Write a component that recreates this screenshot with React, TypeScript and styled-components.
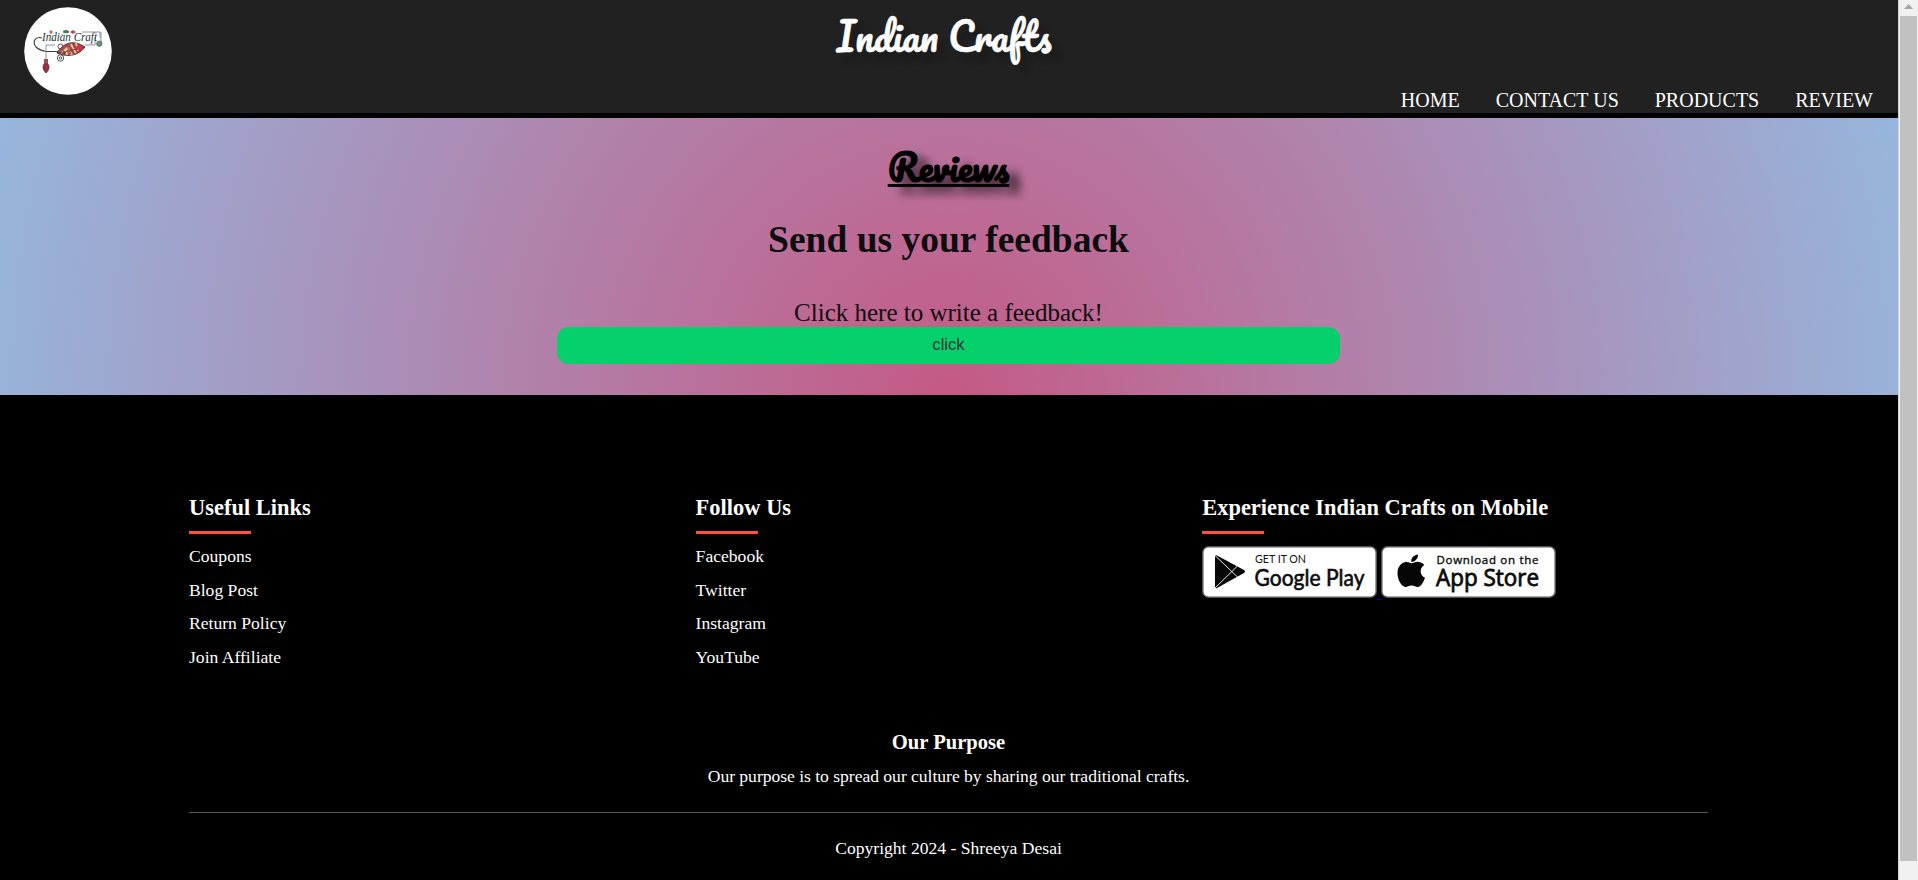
import React from "react";
import styled, { createGlobalStyle } from "styled-components";

const Global = createGlobalStyle`
  * { box-sizing: border-box; margin: 0; padding: 0; }
  html, body { height: 100%; overflow: hidden; }
  body { font-family: "Liberation Serif", "Times New Roman", serif; background: #000; }
`;

const Shell = styled.div`
  display: grid;
  grid-template-columns: 1898px 20px;
  width: 1918px;
  height: 880px;
  overflow: hidden;
`;

const Page = styled.div`
  display: flex;
  flex-direction: column;
  background: radial-gradient(circle 1040px at 949px 392px, #c45a85 0%, #94bbe2 100%);
`;

const Header = styled.header`
  display: grid;
  grid-template-columns: 1fr auto 1fr;
  height: 118px;
  background: #212121;
  border-bottom: 5px solid #000;
`;

const Logo = styled.svg`
  width: 88px;
  height: 88px;
  margin: 7px 0 0 24px;
`;

const Brand = styled.h1`
  height: 80px;
  margin-right: 10px;
  font: normal 400 37.6px/72px Pacifico, cursive;
  -webkit-text-stroke: 0.5px #fff;
  white-space: nowrap;
  color: #fff;
  text-shadow: 8px 8px 6px rgba(0, 0, 0, 0.18);
`;

const Nav = styled.nav`
  display: flex;
  justify-content: flex-end;
  align-items: flex-end;
  gap: 36px;
  padding: 0 25px 1px 0;
`;

const NavLink = styled.a`
  font-size: 20px;
  line-height: 24px;
  color: #fff;
  white-space: nowrap;
`;

const Reviews = styled.section`
  display: flex;
  flex-direction: column;
  align-items: center;
  height: 277px;
  padding: 19px 1px 0 0;
  color: #0d0d0d;
`;

const Title = styled.h1`
  height: 60px;
  font: normal 700 36px/60px Pacifico, cursive;
  color: #000;
  text-decoration: underline;
  text-shadow: 11px 7px 9px rgba(0, 0, 0, 0.6);
`;

const Subtitle = styled.h2`
  margin-top: 21px;
  font-size: 37.5px;
  line-height: 44px;
`;

const Prompt = styled.p`
  margin-top: 37px;
  font-size: 25px;
  line-height: 28px;
`;

const Button = styled.button`
  width: 783px;
  height: 37px;
  border: 0;
  border-radius: 12px;
  background: #06d06c;
  color: #333;
  font: 16.6px "Liberation Sans", Arial, sans-serif;
  padding-bottom: 2px;
`;

const Footer = styled.footer`
  flex: 1;
  padding: 100px 190px 0 189px;
  background: #000;
  color: #fff;
  font-size: 17.6px;
`;

const Columns = styled.div`
  display: grid;
  grid-template-columns: repeat(3, 506.6px);
  height: 235px;
`;

const ColumnTitle = styled.h2`
  width: max-content;
  font-size: 22.4px;
  line-height: 26px;
  letter-spacing: 0.04px;
`;

const Accent = styled.div`
  width: 62px;
  height: 3px;
  margin-top: 10px;
  background: #ff523b;
`;

const List = styled.ul`
  margin-top: 6px;
  list-style: none;
  line-height: 33.6px;
`;

const Badges = styled.div`
  display: flex;
  margin-top: 12px;
`;

const Badge = styled.svg`
  width: 175px;
  height: 52px;
`;

const BadgeGap = styled.span`
  width: 4px;
  height: 1px;
  margin-top: 53px;
  background: #0000ee;
`;

const Purpose = styled.div`
  text-align: center;
  border-bottom: 1px solid #555;
  height: 83px;
  h3 { font-size: 20.6px; line-height: 24px; }
  p { margin-top: 12px; line-height: 20px; letter-spacing: -0.03px; }
`;

const Copyright = styled.p`
  margin-top: 25px;
  text-align: center;
  line-height: 20px;
`;

const ScrollTrack = styled.div`
  display: flex;
  flex-direction: column;
  align-items: center;
  background: #f0f0f0;
  border-left: 1px solid #d2d2d2;
`;

const ScrollArrow = styled.svg`
  width: 17px;
  height: 16px;
`;

const ScrollThumb = styled.div`
  width: 17px;
  height: 845px;
  background: #c1c1c1;
`;

const links = ["Coupons", "Blog Post", "Return Policy", "Join Affiliate"];
const social = ["Facebook", "Twitter", "Instagram", "YouTube"];

const LogoArt = () => (
  <Logo viewBox="0 0 88 88">
    <circle cx="44" cy="44" r="43.8" fill="#fff" />
    <g fill="none" stroke="#3c4044" strokeWidth="0.9">
      <path d="M18 31C11 29 8 35 12 40C15 43 19 44 23 44.5H35" strokeWidth="1.1" />
      <path d="M22 43V38H31M22 45V52M58 25H76V31M61 38H71V30M77 25V37" stroke="#85898b" />
      <circle cx="36.5" cy="39.5" r="2.5" />
      <circle cx="36.5" cy="51" r="3.2" />
      <circle cx="36.5" cy="51" r="1.2" />
    </g>
    <text x="18" y="33.5" fontFamily="Liberation Serif" fontStyle="italic" fontSize="13" fill="#25333a" textLength="55" lengthAdjust="spacingAndGlyphs">Indian Craft</text>
    <path d="M33 46C39 36 49 32 61 40C55 48 45 51 33 46Z" fill="#b9454f" stroke="#3b3032" strokeWidth="0.9" />
    <path d="M37 46L42 42L43 48M43 40L48 48M47 37L52 46M52 36L54 44" stroke="#ecc58a" strokeWidth="2" fill="none" />
    <path d="M33 46C43 45 51 42 61 40M41 47L38 42M47 47L43 39M53 45L49 37" stroke="#423236" strokeWidth="0.7" fill="none" />
    <path d="M54 38L60 40L55 44L51 41Z" fill="#d92f48" />
    <path d="M22 55C26 58 26 62 22 66C18 62 18 58 22 55Z" fill="#a32d3e" stroke="#37353a" strokeWidth="0.8" />
    <path d="M20 52H24V56H20Z" fill="#a9454e" />
    <circle cx="27" cy="25" r="1.7" fill="#cf6768" />
    <ellipse cx="42" cy="24.7" rx="3" ry="1.6" fill="#4d785a" />
    <path d="M46 25L49 23L52 25L49 27Z" fill="#ce4350" />
    <circle cx="75.3" cy="36.7" r="2.7" fill="#6c927b" stroke="#445" strokeWidth="0.6" />
  </Logo>
);

const GoogleBadge = () => (
  <Badge viewBox="0 0 175 52">
    <rect x="0.8" y="0.8" width="173.4" height="50.4" rx="5.5" fill="#fff" stroke="#555" strokeWidth="1.5" />
    <path d="M13 10.5Q13 8.5 15 9.5L42 24Q44 25.5 42 27L15 42Q13 43 13 41Z" fill="#050505" />
    <path d="M13 9.5L35.5 31M13 42L35.5 20" stroke="#fff" strokeWidth="0.9" />
    <text x="53" y="17" fontFamily="Lato" fontSize="11.5" fill="#111" textLength="51" lengthAdjust="spacingAndGlyphs">GET IT ON</text>
    <text x="52.5" y="39.5" fontFamily="Lato" fontSize="22.5" fill="#0b0b0b" stroke="#0b0b0b" strokeWidth="0.6" textLength="110" lengthAdjust="spacingAndGlyphs">Google Play</text>
  </Badge>
);

const AppleBadge = () => (
  <Badge viewBox="0 0 175 52">
    <rect x="0.8" y="0.8" width="173.4" height="50.4" rx="5.5" fill="#fff" stroke="#555" strokeWidth="1.5" />
    <path d="M30.5 17.2C32.5 17.2 34.5 15.6 37.5 15.9C40 16 42 17.2 43.2 19C38 22.2 38.8 29.6 44 31.8C42.6 35.6 40.2 40.9 36.8 41C34.3 41 33.6 39.6 30.6 39.6C27.6 39.6 26.8 41 24.4 41C20.6 40.8 16.5 33.6 16.5 27.5C16.5 20 21 16 25.3 16C27.5 16 29.2 17.2 30.5 17.2Z" fill="#050505" />
    <path d="M37 8.5C37.3 12.5 34 16 30.2 15.8C29.8 12 33.2 8.7 37 8.5Z" fill="#050505" />
    <text x="55.5" y="17.5" fontFamily="Open Sans" fontSize="11.5" fill="#111" stroke="#111" strokeWidth="0.4" textLength="102" lengthAdjust="spacing">Download on the</text>
    <text x="55" y="40.3" fontFamily="Open Sans" fontSize="23" fill="#0b0b0b" stroke="#0b0b0b" strokeWidth="0.8" textLength="103" lengthAdjust="spacingAndGlyphs">App Store</text>
  </Badge>
);

const LinkColumn = ({ title, items }: { title: string; items: string[] }) => (
  <div>
    <ColumnTitle>{title}</ColumnTitle>
    <Accent />
    <List>{items.map((i) => <li key={i}>{i}</li>)}</List>
  </div>
);

export default function App() {
  return (
    <Shell>
      <Global />
      <Page>
        <Header>
          <LogoArt />
          <Brand>Indian Crafts</Brand>
          <Nav>
            {["HOME", "CONTACT US", "PRODUCTS", "REVIEW"].map((n) => <NavLink key={n}>{n}</NavLink>)}
          </Nav>
        </Header>
        <Reviews>
          <Title>Reviews</Title>
          <Subtitle>Send us your feedback</Subtitle>
          <Prompt>Click here to write a feedback!</Prompt>
          <Button>click</Button>
        </Reviews>
        <Footer>
          <Columns>
            <LinkColumn title="Useful Links" items={links} />
            <LinkColumn title="Follow Us" items={social} />
            <div>
              <ColumnTitle>Experience Indian Crafts on Mobile</ColumnTitle>
              <Accent />
              <Badges>
                <GoogleBadge />
                <BadgeGap />
                <AppleBadge />
              </Badges>
            </div>
          </Columns>
          <Purpose>
            <h3>Our Purpose</h3>
            <p>Our purpose is to spread our culture by sharing our traditional crafts.</p>
          </Purpose>
          <Copyright>Copyright 2024 - Shreeya Desai</Copyright>
        </Footer>
      </Page>
      <ScrollTrack>
        <ScrollArrow viewBox="0 0 17 16"><path d="M4 9L8.5 4L13 9Z" fill="#a3a3a3" /></ScrollArrow>
        <ScrollThumb />
      </ScrollTrack>
    </Shell>
  );
}
